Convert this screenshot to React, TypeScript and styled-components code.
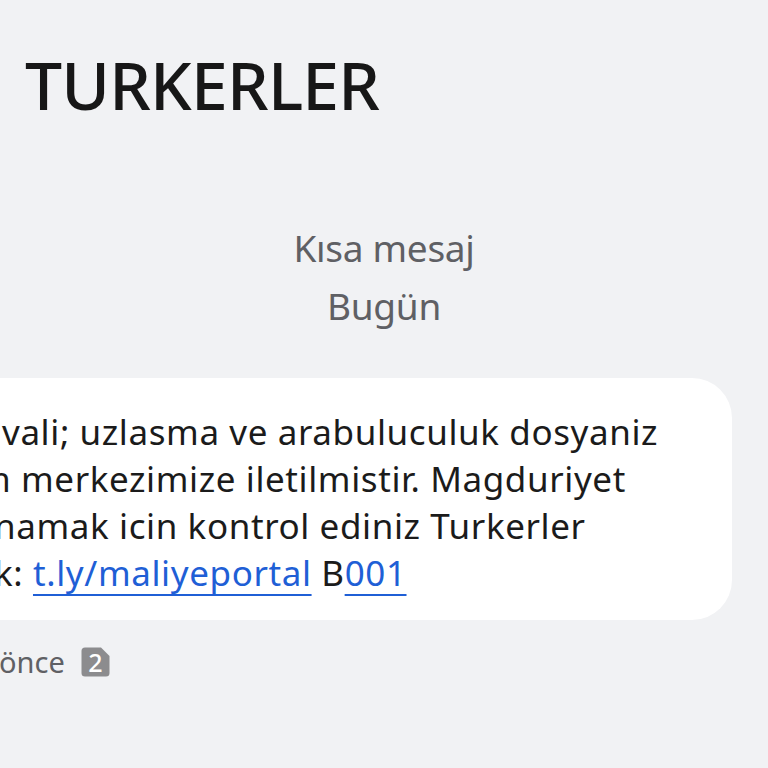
import { createGlobalStyle } from "styled-components";
import styled from "styled-components";

const GlobalStyle = createGlobalStyle`
  html, body {
    margin: 0;
    padding: 0;
    background: #f1f2f4;
    overflow: hidden;
  }
  body {
    font-family: "Noto Sans", "Open Sans", sans-serif;
  }
`;

const Screen = styled.div`
  width: 768px;
  height: 768px;
  display: flex;
  flex-direction: column;
  overflow: hidden;
  background: #f1f2f4;
`;

const Title = styled.h1`
  margin: 0;
  padding: 42px 0 0 25px;
  font-size: 66px;
  line-height: 84px;
  font-weight: 500;
  color: #171717;
  letter-spacing: -0.8px;
`;

const Meta = styled.div`
  margin-top: 93px;
  display: flex;
  flex-direction: column;
  align-items: center;
  color: #5f6064;
  font-size: 37px;
  line-height: 58px;
  letter-spacing: -0.3px;
`;

const Bubble = styled.div`
  margin: 43px 36px 0 -60px;
  padding: 30px 0 24px 62px;
  background: #ffffff;
  border-radius: 40px;
  color: #1b1b1b;
  font-size: 35px;
  line-height: 47px;
  letter-spacing: 0.6px;
`;

const Line = styled.div<{ $shift: number }>`
  white-space: nowrap;
  margin-left: ${(p) => p.$shift}px;
`;

const Link = styled.span`
  color: #1f5fd6;
  text-decoration: underline;
  text-decoration-thickness: 2px;
  text-underline-offset: 8px;
`;

const Footer = styled.div`
  margin-top: 22px;
  display: flex;
  align-items: center;
  gap: 16px;
  color: #5f6064;
  font-size: 29px;
  line-height: 40px;
  margin-left: -1px;
`;

const SimIcon = () => (
  <svg width="29" height="30" viewBox="0 0 29 30">
    <path
      d="M4 0.5 H20 L28.5 9 V26 Q28.5 29.5 25 29.5 H4 Q0.5 29.5 0.5 26 V4 Q0.5 0.5 4 0.5 Z"
      fill="#8c8c8e"
    />
    <text
      x="14.5"
      y="25"
      textAnchor="middle"
      fill="#ffffff"
      fontSize="25"
      fontFamily="Noto Sans, sans-serif"
      fontWeight="500"
    >
      2
    </text>
  </svg>
);

export default function App() {
  return (
    <Screen>
      <GlobalStyle />
      <Title>TURKERLER</Title>
      <Meta>
        <span>Kısa mesaj</span>
        <span>Bugün</span>
      </Meta>
      <Bubble>
        <Line $shift={0}>vali; uzlasma ve arabuluculuk dosyaniz</Line>
        <Line $shift={-24}>m merkezimize iletilmistir. Magduriyet</Line>
        <Line $shift={-8}>namak icin kontrol ediniz Turkerler</Line>
        <Line $shift={-8}>k: <Link>t.ly/maliyeportal</Link> B<Link>001</Link></Line>
      </Bubble>
      <Footer>
        <span>önce</span>
        <SimIcon />
      </Footer>
    </Screen>
  );
}
